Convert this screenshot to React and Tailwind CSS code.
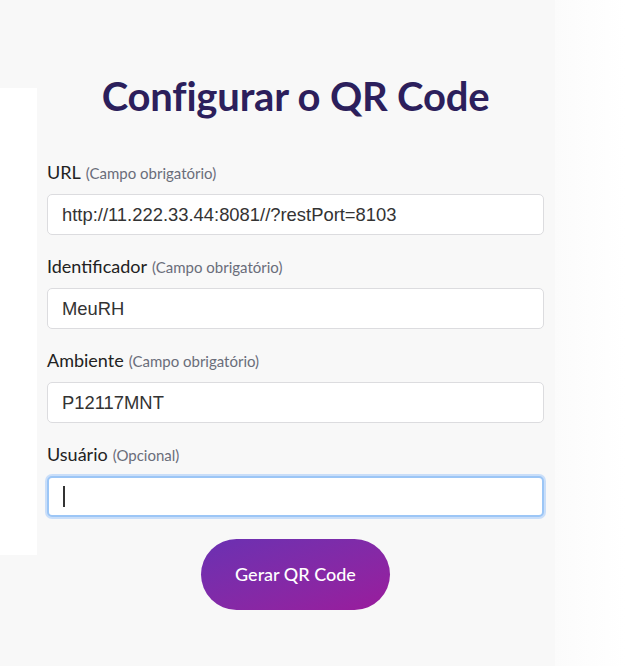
import React from "react";

function Field({ label, hint, value, focused }) {
  return (
    <div className="flex flex-col">
      <label className="flex items-baseline gap-[5px] h-[24px] text-[18px] text-[#222] leading-[24px]">
        <span>{label}</span>
        <span className="text-[15px] text-[#6a6d7a]">({hint})</span>
      </label>
      <div
        className={
          "mt-[10px] h-[41px] rounded-[5px] bg-white flex items-center px-[14px] " +
          (focused
            ? "border-2 border-[#9cc6f6] shadow-[0_0_0_2px_rgba(170,205,250,0.6)]"
            : "border border-[#dcdcdf]")
        }
      >
        {focused ? (
          <span className="w-[2px] h-[21px] bg-[#333]" />
        ) : (
          <span className="text-[18.4px] text-[#333] font-['Liberation_Sans',sans-serif]">{value}</span>
        )}
      </div>
    </div>
  );
}

export default function App() {
  return (
    <div className="relative w-[625px] h-[666px] overflow-hidden bg-[#f8f8f8] font-['Lato',sans-serif]">
      <div className="absolute left-0 top-[88px] w-[37px] h-[467px] bg-white" />
      <div className="absolute left-[555px] top-0 w-[70px] h-[666px] bg-gradient-to-r from-[#fbfbfb] to-white" />
      <div className="relative flex flex-col pt-[72px]">
        <h1 className="text-center text-[40px] font-bold text-[#2c1f5c] leading-[48px] tracking-[-0.2px] pr-[34px]">
          Configurar o QR Code
        </h1>
        <div className="mt-[40px] ml-[47px] w-[497px] flex flex-col gap-[19px]">
          <Field label="URL" hint="Campo obrigatório" value="http://11.222.33.44:8081//?restPort=8103" />
          <Field label="Identificador" hint="Campo obrigatório" value="MeuRH" />
          <Field label="Ambiente" hint="Campo obrigatório" value="P12117MNT" />
          <Field label="Usuário" hint="Opcional" focused />
        </div>
        <div className="mt-[22px] flex justify-center pr-[34px]">
          <button className="w-[189px] h-[71px] rounded-full bg-gradient-to-br from-[#6a30b2] to-[#9a1a9c] text-white text-[18px] font-medium">
            Gerar QR Code
          </button>
        </div>
      </div>
    </div>
  );
}
